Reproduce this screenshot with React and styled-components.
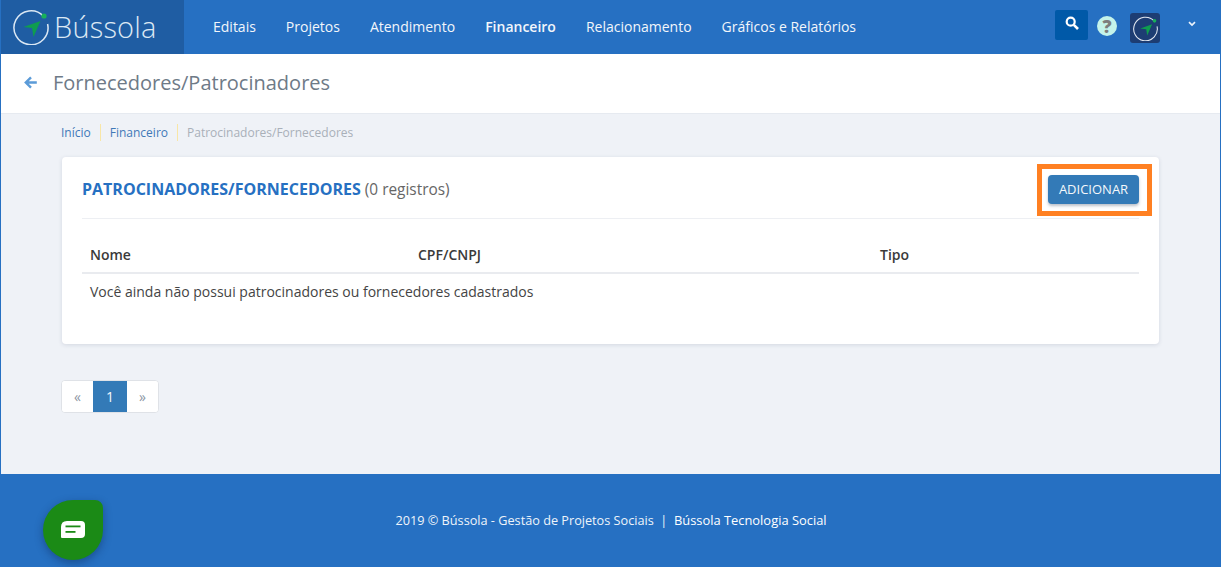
import React from 'react';
import styled, { createGlobalStyle } from 'styled-components';

const Global = createGlobalStyle`
  html, body { margin: 0; padding: 0; height: 100%; }
  body { font-family: "Open Sans", "Noto Sans", sans-serif; background: #eff2f7; }
  #root { height: 567px; }
`;
const Page = styled.div`
  height: 567px; display: flex; flex-direction: column; position: relative;
  border-left: 1px solid #2670c2; border-right: 1px solid #2670c2; box-sizing: border-box; overflow: hidden;
`;
const Header = styled.header`
  height: 54px; flex: none; display: flex; align-items: stretch; background: #2670c2; margin-left: -1px; margin-right: -1px;
`;
const Brand = styled.div`
  width: 184px; background: #1f5da3; display: flex; align-items: center; padding-left: 13px; gap: 5px; box-sizing: border-box;
`;
const BrandName = styled.span`
  font-size: 29px; color: #dbe8f4; font-weight: 300; letter-spacing: 0.2px; line-height: 54px;
`;
const Nav = styled.nav`
  display: flex; align-items: center; gap: 30px; padding: 0 0 2px 29px; flex: 1;
`;
const NavItem = styled.a`
  color: #f2f6fb; font-size: 14px; font-weight: ${p => (p.$active ? 600 : 400)};
`;
const Tools = styled.div`
  display: flex; align-items: flex-start; padding-top: 10px;
`;
const SearchBtn = styled.button`
  width: 33px; height: 30px; border: 0; border-radius: 2px; background: #0059a8; display: flex; align-items: center; justify-content: center; padding: 0 0 5px; margin-right: 9px;
`;
const Help = styled.span`
  width: 20px; height: 20px; margin-top: 6px; border-radius: 50%; background: #c4f3ea; color: #7d7d7d; font: 800 18px/20px "Open Sans", sans-serif; text-align: center; margin-right: 13px;
`;
const Avatar = styled.div`
  width: 30px; height: 30px; margin-top: 3px; border-radius: 3px; background: #1d3d73; display: flex; align-items: center; justify-content: center;
`;
const Caret = styled.div`
  width: 61px; height: 28px; display: flex; align-items: center; justify-content: center; padding-left: 3px; box-sizing: border-box;
`;
const TitleBar = styled.div`
  height: 60px; flex: none; background: #fff; display: flex; align-items: center; padding: 0 0 2px 23px; gap: 16px; border-bottom: 1px solid #e6eaf0; box-sizing: border-box;
`;
const Title = styled.h1`
  margin: 0; font-size: 20px; font-weight: 400; color: #6e7a87;
`;
const Main = styled.main`
  flex: 1; padding: 0 61px; display: flex; flex-direction: column; align-items: stretch;
`;
const Crumbs = styled.div`
  height: 43px; display: flex; align-items: center; font-size: 12px; padding-bottom: 6px; margin-left: -1px; box-sizing: border-box;
`;
const Crumb = styled.span`
  color: ${p => (p.$current ? '#a9b0b9' : '#3f79b8')};
  padding-right: 9px; margin-right: 9px; line-height: 17px;
  border-right: ${p => (p.$current ? '0' : '1px solid #f8e6a6')};
`;
const Card = styled.section`
  background: #fff; border-radius: 4px; height: 187px; padding: 0 20px; box-shadow: 0 1px 4px rgba(40,60,90,.14); box-sizing: border-box;
`;
const CardHead = styled.div`
  height: 62px; display: flex; align-items: center; justify-content: space-between; border-bottom: 1px solid #edeff3; box-sizing: border-box;
`;
const CardTitle = styled.div`
  font-size: 15.4px; color: #666; padding-top: 2px;
`;
const Strong = styled.strong`
  color: #2670c2; font-size: 16px; font-weight: 700;
`;
const Highlight = styled.div`
  border: 5px solid #ff8022; padding: 6px 8px 7px 6px; margin-right: -13px; display: flex; margin-top: 4px;
`;
const AddBtn = styled.button`
  width: 91px; height: 29px; background: #337ab7; color: #f4f8fb; border: 0; border-radius: 4px; font: 400 13px "Open Sans", sans-serif; box-shadow: 0 2px 3px rgba(30,50,80,.3); padding: 0;
`;
const Table = styled.table`
  width: 100%; border-collapse: collapse; font-size: 14px; color: #444; table-layout: fixed;
`;
const Th = styled.th`
  text-align: left; font-weight: 600; height: 54px; vertical-align: bottom; padding: 0 8px 8px; width: ${p => p.$w}; border-bottom: 2px solid #e9ebef; box-sizing: border-box; color: #3a3a3a;
`;
const Td = styled.td`
  padding: 8px 8px; font-size: 14px; color: #444;
`;
const Pager = styled.div`
  margin: 36px 0 0 -1px; display: flex; align-self: flex-start; height: 33px; border: 1px solid #dfe2e7; border-radius: 4px; background: #fff; overflow: hidden; box-sizing: border-box;
`;
const PageCell = styled.span`
  width: ${p => (p.$active ? '34px' : '31px')}; display: flex; align-items: center; justify-content: center; font-size: 14px;
  background: ${p => (p.$active ? '#337ab7' : '#fff')}; color: ${p => (p.$active ? '#f4f8fb' : '#8b96a3')};
`;
const Footer = styled.footer`
  height: 93px; flex: none; background: #2670c2; color: #eef4fa; font-size: 12.7px; display: flex; align-items: center; justify-content: center; margin: 0 -1px; padding: 0 0 2px 1px; white-space: pre; box-sizing: border-box;
`;
const FooterStrong = styled.span`
  font-weight: 500; color: #fff; font-size: 12.9px;
`;
const Chat = styled.div`
  position: absolute; left: 42px; top: 500px; width: 60px; height: 60px; background: #1b8a16; border-radius: 50% 8px 50% 50%; padding-bottom: 1px; box-sizing: border-box;
  box-shadow: 0 3px 8px rgba(10,30,70,.4); display: flex; align-items: center; justify-content: center;
`;

const Logo = ({ size, ring = '#dbe8f4' }) => (
  <svg width={size} height={size} viewBox="0 0 36 36" fill="none">
    <path d="M30.5 7.2A17 17 0 1 0 34.6 15" stroke={ring} strokeWidth="1.5" fill="none" />
    <circle cx="31" cy="7" r="2.6" fill="#18b05a" />
    <path d="M10.5 18 L27.5 12 L20.5 28 L19 19 Z" fill="#0f9d4f" />
  </svg>
);

export default function App() {
  return (
    <Page>
      <Global />
      <Header>
        <Brand>
          <Logo size={36} />
          <BrandName>Bússola</BrandName>
        </Brand>
        <Nav>
          <NavItem>Editais</NavItem>
          <NavItem>Projetos</NavItem>
          <NavItem>Atendimento</NavItem>
          <NavItem $active>Financeiro</NavItem>
          <NavItem>Relacionamento</NavItem>
          <NavItem>Gráficos e Relatórios</NavItem>
        </Nav>
        <Tools>
          <SearchBtn aria-label="Buscar">
            <svg width="14" height="14" viewBox="0 0 14 14" fill="none">
              <circle cx="5.7" cy="5.7" r="4" stroke="#fff" strokeWidth="2.2" />
              <path d="M8.8 8.8 L13 13" stroke="#fff" strokeWidth="2.6" />
            </svg>
          </SearchBtn>
          <Help>?</Help>
          <Avatar><Logo size={25} ring="#e4e9f2" /></Avatar>
          <Caret>
            <svg width="8" height="6" viewBox="0 0 8 6" fill="none"><path d="M1 1.2 L4 4 L7 1.2" stroke="#eaf2fb" strokeWidth="1.7" /></svg>
          </Caret>
        </Tools>
      </Header>
      <TitleBar>
        <svg width="13" height="13" viewBox="0 0 13 13" fill="none">
          <path d="M12.8 6.5 H2 M7 1.3 L1.8 6.5 L7 11.7" stroke="#5b9bd8" strokeWidth="2.4" />
        </svg>
        <Title>Fornecedores/Patrocinadores</Title>
      </TitleBar>
      <Main>
        <Crumbs>
          <Crumb>Início</Crumb>
          <Crumb>Financeiro</Crumb>
          <Crumb $current>Patrocinadores/Fornecedores</Crumb>
        </Crumbs>
        <Card>
          <CardHead>
            <CardTitle><Strong>PATROCINADORES/FORNECEDORES</Strong> (0 registros)</CardTitle>
            <Highlight><AddBtn>ADICIONAR</AddBtn></Highlight>
          </CardHead>
          <Table>
            <thead>
              <tr>
                <Th $w="328px">Nome</Th>
                <Th $w="462px">CPF/CNPJ</Th>
                <Th>Tipo</Th>
              </tr>
            </thead>
            <tbody>
              <tr><Td colSpan="3">Você ainda não possui patrocinadores ou fornecedores cadastrados</Td></tr>
            </tbody>
          </Table>
        </Card>
        <Pager>
          <PageCell>«</PageCell>
          <PageCell $active>1</PageCell>
          <PageCell>»</PageCell>
        </Pager>
      </Main>
      <Footer>2019 © Bússola - Gestão de Projetos Sociais  |  <FooterStrong>Bússola Tecnologia Social</FooterStrong></Footer>
      <Chat>
        <svg width="24" height="17" viewBox="0 0 24 17">
          <path d="M6 0 H20 Q24 0 24 4 V13 Q24 17 20 17 H1 Q0 17 0 16 V6 Q0 0 6 0 Z" fill="#fff" />
          <rect x="4.5" y="4.5" width="15" height="1.8" fill="#1b8a16" />
          <rect x="4.5" y="10" width="10" height="1.8" fill="#1b8a16" />
        </svg>
      </Chat>
    </Page>
  );
}
